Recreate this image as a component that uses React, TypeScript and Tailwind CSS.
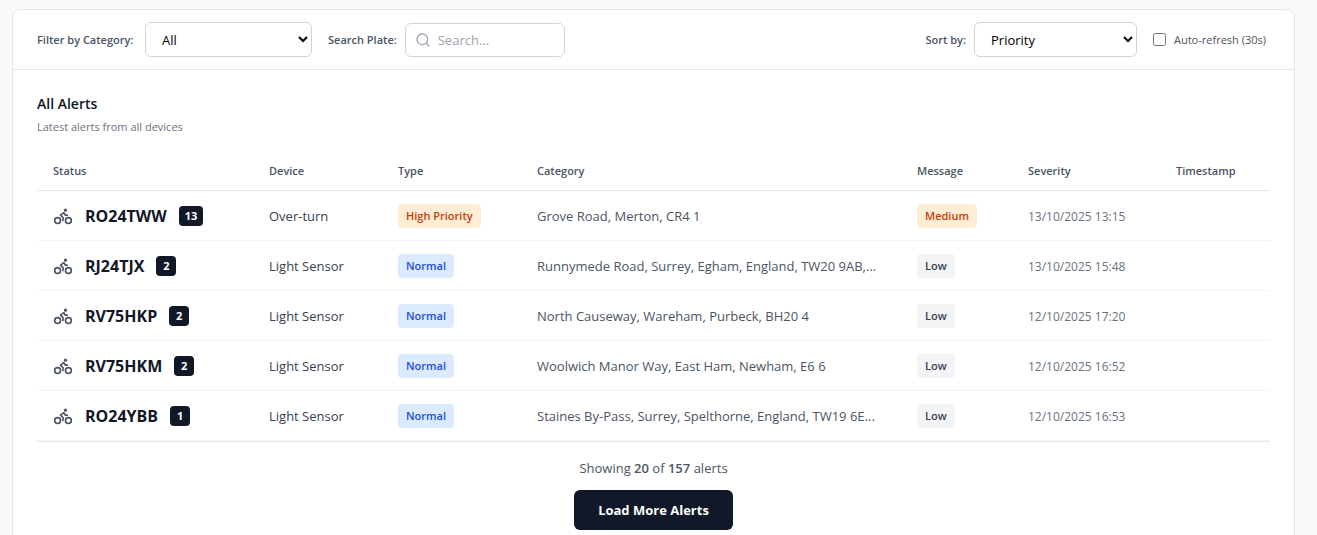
import { useState } from "react";
import { Bike, Search } from "lucide-react";

type Alert = {
  plate: string;
  count: number;
  type: string;
  priority: "High Priority" | "Normal";
  location: string;
  severity: "Medium" | "Low";
  time: string;
};

const alerts: Alert[] = [
  { plate: "RO24TWW", count: 13, type: "Over-turn", priority: "High Priority", location: "Grove Road, Merton, CR4 1", severity: "Medium", time: "13/10/2025 13:15" },
  { plate: "RJ24TJX", count: 2, type: "Light Sensor", priority: "Normal", location: "Runnymede Road, Surrey, Egham, England, TW20 9AB,...", severity: "Low", time: "13/10/2025 15:48" },
  { plate: "RV75HKP", count: 2, type: "Light Sensor", priority: "Normal", location: "North Causeway, Wareham, Purbeck, BH20 4", severity: "Low", time: "12/10/2025 17:20" },
  { plate: "RV75HKM", count: 2, type: "Light Sensor", priority: "Normal", location: "Woolwich Manor Way, East Ham, Newham, E6 6", severity: "Low", time: "12/10/2025 16:52" },
  { plate: "RO24YBB", count: 1, type: "Light Sensor", priority: "Normal", location: "Staines By-Pass, Surrey, Spelthorne, England, TW19 6E...", severity: "Low", time: "12/10/2025 16:53" },
];

const badgeColors = {
  "High Priority": "bg-[#ffedd5] text-[#c2410c]",
  Normal: "bg-[#dbeafe] text-[#1d4ed8]",
  Medium: "bg-[#ffedd5] text-[#c2410c]",
  Low: "bg-[#f3f4f6] text-[#374151]",
};

const columns = [
  { title: "Status", width: "w-[216px]" },
  { title: "Device", width: "w-[129px]" },
  { title: "Type", width: "w-[139px]" },
  { title: "Category", width: "" },
  { title: "Message", width: "w-[111px]" },
  { title: "Severity", width: "w-[148px]" },
  { title: "Timestamp", width: "w-[110px]" },
];

function Badge({ label }: { label: keyof typeof badgeColors }) {
  return (
    <span className={`flex h-6 w-fit items-center rounded px-2 pt-px text-[11px] font-semibold whitespace-nowrap ${badgeColors[label]}`}>
      {label}
    </span>
  );
}

function AlertRow({ alert }: { alert: Alert }) {
  const cell = "h-[50px] border-b border-[#f3f4f6] px-4 pb-0";
  return (
    <tr>
      <td className={`${cell} pt-px`}>
        <div className="flex items-center gap-3">
          <Bike className="size-5 shrink-0 text-[#4b5563]" />
          <span className="text-base leading-5 font-bold text-[#111827]">{alert.plate}</span>
          <span className="flex h-5 min-w-5 items-center justify-center rounded bg-[#111827] px-1.5 text-[11px] font-bold text-white">{alert.count}</span>
        </div>
      </td>
      <td className={`${cell} pt-0.5 text-[13px] whitespace-nowrap text-[#374151]`}>{alert.type}</td>
      <td className={`${cell} pt-px`}><Badge label={alert.priority} /></td>
      <td className={`${cell} truncate pt-0.5 text-[13px] text-[#4b5563]`}>{alert.location}</td>
      <td className={`${cell} pt-px`}><Badge label={alert.severity} /></td>
      <td className={`${cell} pt-0.5 text-xs whitespace-nowrap text-[#6b7280]`}>{alert.time}</td>
      <td className={`${cell} pt-px`} />
    </tr>
  );
}

export default function App() {
  const [category, setCategory] = useState("All");
  const [sort, setSort] = useState("Priority");
  const [query, setQuery] = useState("");
  const [autoRefresh, setAutoRefresh] = useState(false);
  const rows = alerts.filter((a) => a.plate.toLowerCase().includes(query.toLowerCase()));

  return (
    <div className="min-h-screen bg-[#f9fafb] pt-[9px] pr-[22px] pb-6 pl-3 font-['Open_Sans','Noto_Sans',sans-serif]">
      <main className="rounded-lg border border-[#e5e7eb] bg-white">
        <div className="flex items-center justify-between gap-4 border-b border-[#e5e7eb] px-6 py-3">
          <div className="flex items-center gap-4">
            <div className="flex items-center gap-2">
              <label htmlFor="category" className="min-w-[100px] pt-0.5 text-[11px] font-semibold whitespace-nowrap text-[#4b5563]">Filter by Category:</label>
              <select id="category" value={category} onChange={(e) => setCategory(e.target.value)} className="h-[35px] w-[167px] rounded-md border border-[#d1d5db] bg-white px-3 text-[13px] text-black">
                <option>All</option>
                <option>Device</option>
                <option>Sensor</option>
              </select>
            </div>
            <div className="flex items-center gap-2">
              <label htmlFor="plate" className="pt-0.5 text-[11px] font-semibold whitespace-nowrap text-[#4b5563]">Search Plate:</label>
              <div className="relative">
                <Search className="absolute top-1/2 left-2.5 size-4 -translate-y-1/2 text-[#9ca3af]" />
                <input id="plate" type="text" value={query} onChange={(e) => setQuery(e.target.value)} placeholder="Search..." className="block h-[34px] w-40 rounded-md border border-[#d1d5db] bg-white pr-3 pl-8 text-[13px] text-[#111827] placeholder:text-[#9ca3af]" />
              </div>
            </div>
          </div>
          <div className="flex items-center gap-4">
            <div className="flex items-center gap-2">
              <label htmlFor="sort" className="pt-0.5 text-[11px] font-semibold whitespace-nowrap text-[#4b5563]">Sort by:</label>
              <select id="sort" value={sort} onChange={(e) => setSort(e.target.value)} className="h-[35px] w-[163px] rounded-md border border-[#d1d5db] bg-white px-3 text-[13px] text-black">
                <option>Priority</option>
                <option>Newest</option>
              </select>
            </div>
            <div className="flex items-center gap-2">
              <input id="refresh" type="checkbox" checked={autoRefresh} onChange={(e) => setAutoRefresh(e.target.checked)} className="size-[13px]" />
              <label htmlFor="refresh" className="min-w-24 pt-0.5 text-[11px] whitespace-nowrap text-[#4b5563]">Auto-refresh (30s)</label>
            </div>
          </div>
        </div>

        <section className="px-6 pt-6 pb-6">
          <h2 className="text-sm leading-5 font-semibold text-[#111827]">All Alerts</h2>
          <p className="mt-1 text-[11px] leading-[18px] text-[#6b7280]">Latest alerts from all devices</p>

          <table className="mt-4 w-full table-fixed border-separate border-spacing-0">
            <thead>
              <tr>
                {columns.map((c) => (
                  <th key={c.title} scope="col" className={`h-[39px] border-b border-[#e5e7eb] px-4 py-0 text-left text-[11px] font-semibold text-[#4b5563] ${c.width}`}>{c.title}</th>
                ))}
              </tr>
            </thead>
            <tbody>
              {rows.map((a) => <AlertRow key={a.plate} alert={a} />)}
            </tbody>
          </table>

          <div className="flex flex-col items-center gap-3 border-t border-[#e5e7eb] pt-4">
            <p className="text-[13px] leading-5 text-[#4b5563]">
              Showing <strong className="font-semibold">20</strong> of <strong className="font-semibold">157</strong> alerts
            </p>
            <button type="button" className="h-10 rounded-md bg-[#111827] px-6 pt-0.5 text-[13px] font-bold text-white">Load More Alerts</button>
          </div>
        </section>
      </main>
    </div>
  );
}
